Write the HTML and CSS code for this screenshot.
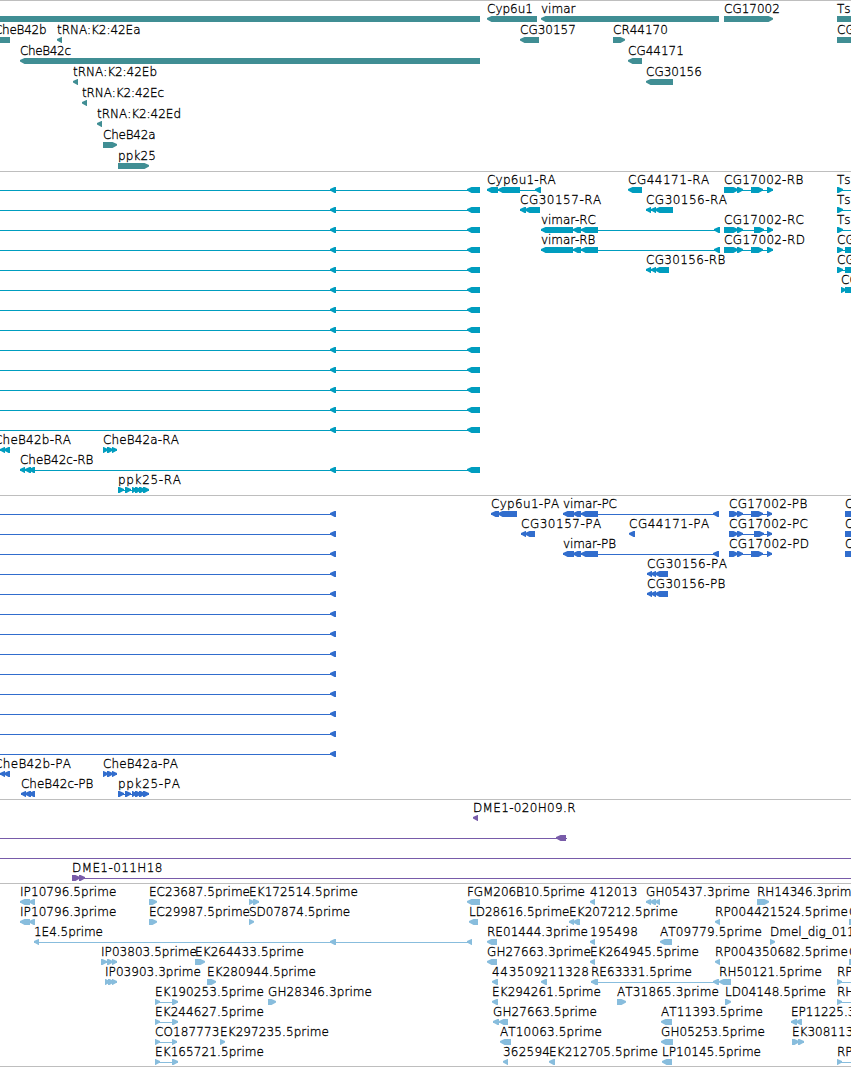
FILE: index.html
```
<!DOCTYPE html>
<html lang="en">
<head>
<meta charset="utf-8">
<title>Genome browser</title>
<link rel="stylesheet" href="styles.css">
</head>
<body>
<main class="browser">
<svg class="track track-gene" data-track="gene" data-pitch="21"></svg>
<svg class="track track-transcript" data-track="transcript" data-pitch="20"></svg>
<svg class="track track-protein" data-track="protein" data-pitch="20"></svg>
<svg class="track track-bac" data-track="bac" data-pitch="20"></svg>
<svg class="track track-est" data-track="est" data-pitch="20"></svg>
</main>
<script src="tracks.js"></script>
</body>
</html>
```
FILE: styles.css
```
body {
  margin: 0;
  background: #fff;
}
.browser {
  display: flex;
  flex-direction: column;
  width: 851px;
  height: 1067px;
  overflow: hidden;
}
.track {
  display: block;
  box-sizing: border-box;
  flex: none;
  width: 851px;
  border-top: 1px solid #bebebe;
  overflow: hidden;
}
.track-gene { height: 171px; color: #408e94; }
.track-transcript { height: 324px; color: #009dbf; }
.track-protein { height: 304px; color: #316dcd; }
.track-bac { height: 84px; color: #785ba9; }
.track-est { height: 184px; color: #88bddd; border-bottom: 1px solid #bebebe; }
.shape { fill: currentColor; }
.label {
  fill: #000;
  stroke: #000;
  stroke-width: 0.3px;
  font-family: "DejaVu Sans", sans-serif;
  font-size: 12px;
  font-weight: 200;
  font-kerning: none;
}
```
FILE: tracks.js
```
// One feature per line: row | label@right edge | strand | blocks | line extent (optional)
const long13 = (blocks, end) =>
  Array.from({ length: 13 }, (_, i) => `${i}||<|${blocks}|-9 ${end}`).join("\n");

const tracks = {
gene: `0||<|-20 480
0|Cyp6u1|<|487 537
0|vimar|<|541 719
0|CG17002|>|724 773
0|Ts|>|837 900
1|CheB42b@46.5|<|-6 10
1|tRNA:K2:42Ea@140.5|<|57 62
1|CG30157|<|520 539
1|CR44170|>|613 625
1|CG|>|837 900
2|CheB42c@71|<|20 480
2|CG44171|<|628 642
3|tRNA:K2:42Eb@157|<|73 78
3|CG30156|<|646 673
4|tRNA:K2:42Ec@164|<|82 87
5|tRNA:K2:42Ed@181|<|97 102
6|CheB42a@155.5|>|103 117
7|ppk25@156|>|118 149`,
transcript: long13("330 336,467 480", 480) + `
0|Cyp6u1-RA@555.7|<|487 498,498 520,535 541
0|CG44171-RA@709.3|<|628 642
0|CG17002-RB@803.3|>|724 738,737 743,751 757,753 763,767 773
0|Ts|>|837 843,890 900
1|CG30157-RA@601.3|<|520 526,525 540
1|CG30156-RA@727|<|646 651,651 656,655 673
1|Ts|>|837 843,890 900
2|vimar-RC@596|<|541 573,573 581,581 598,714 720
2|CG17002-RC@804|>|724 738,737 743,754 764,767 773
2|Ts|>|837 843,890 900
3|vimar-RB@595.4|<|541 573,573 581,581 598,714 720
3|CG17002-RD@805|>|724 738,737 743,751 757,753 763,767 773
3|CG|>|837 843,845 900
4|CG30156-RB@725.4|<|646 651,651 656,655 669
4|CG|>|837 843,845 900
5|CG|>|841 846,845 900
13|CheB42b-RA@71|<|0 5,4 10|-6 10
13|CheB42a-RA@179|>|103 108,107 113,112 117
14|CheB42c-RB@93.4|<|20 25,25 31,29 35,330 336,467 480
15|ppk25-RA@181|>|118 124,125 131,132 137,135 141,139 145,143 149`,
protein: long13("330 336", 336) + `
0|Cyp6u1-PA@559.3|<|491 499,498 517
0|vimar-PC@617|<|563 574,573 581,581 598,713 719
0|CG17002-PB@807.3|>|729 738,737 743,751 757,753 763,767 772
0|C|>|845 900
1|CG30157-PA@601.3|<|521 526,525 535
1|CG44171-PA@709.3|<|629 635
1|CG17002-PC@808|>|729 738,737 743,754 764,767 772
1|C|>|845 900
2|vimar-PB@616|<|563 574,573 581,581 598,713 719
2|CG17002-PD@809|>|729 738,737 743,751 757,753 763,767 772
2|C|>|845 900
3|CG30156-PA@727|<|647 652,651 656,655 668
4|CG30156-PB@725.4|<|647 652,651 656,655 668
13|CheB42b-PA@71|<|0 5,4 10|-6 10
13|CheB42a-PA@178|>|103 108,107 113,112 117
14|CheB42c-PB@93.4|<|21 26,25 31,29 35
14|ppk25-PA@180|>|118 124,125 131,132 137,135 141,139 145,143 149`,
bac: `0|DME1-020H09.R@575.5|<|473 478
1||<|556 566|-9 567
2||<||-9 900
3|DME1-011H18@162.3|>|72 80,79 85|72 900`,
est: `0|IP10796.5prime@116.3|<|20 30,29 35
0|EC23687.5prime@250|>|149 157
0|EK172514.5prime@358|>|249 254,253 259
0|FGM206B10.5prime@585|<|467 480
0|412013@637.5|<|590 595
0|GH05437.3prime@750|<|646 651,650 656,655 660
0|RH14346.3prim|>|757 769
1|IP10796.3prime@116.3|<|20 30,29 35
1|EC29987.5prime@250|>|149 157
1|SD07874.5prime@350.2|>|249 254
1|LD28616.5prime@569.5|<|469 478
1|EK207212.5prime@678|<|569 574,573 580
1|RP004421524.5prime@848|<|715 720
1|C|>|849 900
2|1E4.5prime@103|<|34 39,330 336,467 472
2|RE01444.3prime@588|<|487 497
2|195498@638|<|590 595
2|AT09779.5prime@762|<|660 672
2|Dmel_dig_011|>|770 775
3|IP03803.5prime@197|>|101 107,107 113,112 117
3|EK264433.5prime@304|>|195 205
3|GH27663.3prime@591|<|487 497
3|EK264945.5prime@699|<|590 595
3|RP004350682.5prime@848|<|715 720
3|C|>|849 900
4|IP03903.3prime@201|>|105 110,108 114,112 117
4|EK280944.5prime@316|>|207 216
4|443509@541.5|<|492 498
4|211328@589|<|541 547
4|RE63331.5prime@692|<|591 598,713 719
4|RH50121.5prime@822|<|719 731
4|RP|>|837 842,890 900
5|EK190253.5prime@264|>|155 160,172 178
5|GH28346.3prime@372|>|268 276
5|EK294261.5prime@601|<|492 498
5|AT31865.3prime@719|>|617 626
5|LD04148.5prime@826|>|725 731
5|RH|>|837 842,890 900
6|EK244627.5prime@264|>|155 160,172 178
6|GH27663.5prime@597|<|493 499,499 508
6|AT11393.5prime@763|<|661 672
6|EP11225.3|<|791 797,796 802
7|CO187773@219.5|>|155 160,172 177
7|EK297235.5prime@329|>|220 225
7|AT10063.5prime@602|<|500 511
7|GH05253.5prime@765|<|661 673
7|EK308113|>|792 799,798 804
8|EK165721.5prime@264|>|155 160,172 178
8|362594@550|<|503 508
8|EK212705.5prime@658|<|549 555
8|LP10145.5prime@761|<|662 672
8|RP|>|837 842,890 900`
};

const NS = "http://www.w3.org/2000/svg";
function add(parent, tag, attrs, text) {
  const el = document.createElementNS(NS, tag);
  for (const k in attrs) el.setAttribute(k, attrs[k]);
  if (text) el.textContent = text;
  parent.appendChild(el);
}

document.querySelectorAll(".track").forEach(svg => {
  const pitch = Number(svg.dataset.pitch);
  tracks[svg.dataset.track].split("\n").forEach(line => {
    const [row, name, strand, blockText, extent] = line.split("|");
    const [label, edge] = name.split("@");
    const top = 15 + row * pitch;
    const blocks = blockText ? blockText.split(",").map(b => b.split(" ").map(Number)) : [];
    const [from, to] = extent ? extent.split(" ").map(Number)
      : [blocks[0][0], blocks[blocks.length - 1][1]];
    if (extent || blocks.length > 1) {
      add(svg, "rect", { class: "shape", x: from, y: top + 3, width: to - from, height: 1 });
    }
    blocks.forEach(([a, b]) => {
      const head = Math.min(4.5, b - a);
      const points = strand === "<"
        ? `${b},${top} ${a + head},${top} ${a},${top + 2} ${a},${top + 3.6} ${a + head},${top + 6} ${b},${top + 6}`
        : `${a},${top} ${b - head},${top} ${b},${top + 2} ${b},${top + 3.6} ${b - head},${top + 6} ${a},${top + 6}`;
      add(svg, "polygon", { class: "shape", points });
    });
    if (label) {
      const attrs = { class: "label", x: from, y: top - 3 };
      if (edge) attrs.textLength = edge - from;
      add(svg, "text", attrs, label);
    }
  });
});
```
